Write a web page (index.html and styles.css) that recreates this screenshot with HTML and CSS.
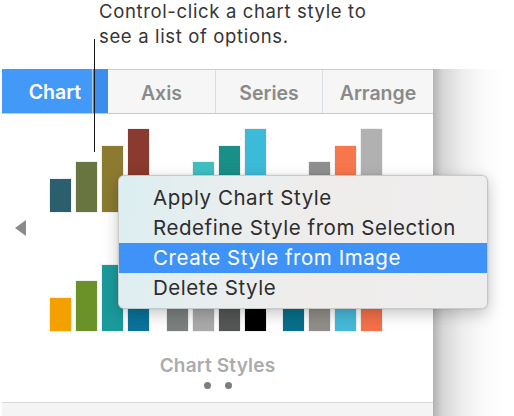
FILE: index.html
```html
<!DOCTYPE html>
<html>
<head>
<meta charset="utf-8">
<link rel="stylesheet" href="styles.css">
</head>
<body>
<div class="page">
  <p class="caption">Control-click a chart style to<br>see a list of options.</p>
  <div class="inspector">
    <div class="panel">
      <div class="tabs">
        <div class="tab active">Chart</div>
        <div class="tab">Axis</div>
        <div class="tab">Series</div>
        <div class="tab">Arrange</div>
      </div>
      <div class="content">
        <div class="styles">
          <span class="arrow"></span>
          <div class="grid">
            <div class="thumb">
              <span class="bar h1" style="background:#2b5f6e"></span>
              <span class="bar h2" style="background:#687540"></span>
              <span class="bar h3" style="background:#8c7a30"></span>
              <span class="bar h4" style="background:#8a3a2e"></span>
            </div>
            <div class="thumb">
              <span class="bar h1" style="background:#2a7d8c"></span>
              <span class="bar h2" style="background:#40bfc1"></span>
              <span class="bar h3" style="background:#1a8f88"></span>
              <span class="bar h4" style="background:#3cbbd8"></span>
            </div>
            <div class="thumb">
              <span class="bar h1" style="background:#666666"></span>
              <span class="bar h2" style="background:#8f8f8f"></span>
              <span class="bar h3" style="background:#f7764b"></span>
              <span class="bar h4" style="background:#b1b1b1"></span>
            </div>
            <div class="thumb">
              <span class="bar h1" style="background:#f2a100"></span>
              <span class="bar h2" style="background:#6b9129"></span>
              <span class="bar h3" style="background:#1b9a9b"></span>
              <span class="bar h4" style="background:#0a729b"></span>
            </div>
            <div class="thumb">
              <span class="bar h1" style="background:#7b807e"></span>
              <span class="bar h2" style="background:#a9a9a9"></span>
              <span class="bar h3" style="background:#545756"></span>
              <span class="bar h4" style="background:#000000"></span>
            </div>
            <div class="thumb">
              <span class="bar h1" style="background:#076f8b"></span>
              <span class="bar h2" style="background:#918d88"></span>
              <span class="bar h3" style="background:#46b9d9"></span>
              <span class="bar h4" style="background:#f47048"></span>
            </div>
          </div>
        </div>
        <div class="label">Chart Styles</div>
        <div class="dots"><span></span><span></span></div>
      </div>
      <div class="footer"></div>
    </div>
    <div class="shade"></div>
  </div>
  <div class="leader"></div>
  <ul class="menu">
    <li>Apply Chart Style</li>
    <li>Redefine Style from Selection</li>
    <li class="selected">Create Style from Image</li>
    <li>Delete Style</li>
  </ul>
</div>
</body>
</html>
```

FILE: styles.css
```css
* { box-sizing: border-box; }
html, body { margin: 0; padding: 0; background: #fff; }
body { font-family: Inter, "Liberation Sans", sans-serif; }
.page { position: relative; width: 514px; height: 416px; overflow: hidden; }

.caption {
  margin: -1px 0 0;
  height: 70px;
  padding-left: 99px;
  font-size: 18.5px;
  line-height: 25px;
  letter-spacing: 0.65px;
  color: #353535;
}

.inspector { display: flex; height: 347px; }
.panel { margin-left: 2px; width: 431px; display: flex; flex-direction: column; background: #fff; }
.shade { flex: 1; background: linear-gradient(to right, #b3b3b3 0, #d6d6d6 10px, #eeeeee 30px, #fafafa 50px, #ffffff 70px); }

.tabs {
  display: grid;
  grid-template-columns: 106px 107px 107px 111px;
  height: 45px;
  border-top: 1px solid #cbcbcb;
  border-bottom: 1px solid #c9c9c9;
  background: #f6f6f6;
}
.tab {
  display: flex; align-items: center; justify-content: center;
  padding-top: 2px;
  font-size: 19.5px; font-weight: 600; color: #8a8a8a;
}
.tab + .tab { border-left: 1px solid #d7dde3; }
.tab.active + .tab { border-left: 0; }
.tab.active {
  color: #fff;
  margin-top: -1px;
  background: linear-gradient(to right, #4399f7 0 90px, #a6cbf4 90px 91px, #3b8eed 91px);
}

.content { flex: 1; display: flex; flex-direction: column; align-items: center; }
.styles { align-self: stretch; display: flex; align-items: center; padding: 15px 0 0 13px; }
.arrow {
  width: 0; height: 0;
  border-right: 11px solid #8a8a8a;
  border-top: 8.5px solid transparent;
  border-bottom: 8.5px solid transparent;
  margin: -5px 24px 0 0;
}
.grid { display: grid; grid-template-columns: repeat(3, 99px); column-gap: 17.5px; row-gap: 36px; }
.thumb { display: flex; align-items: flex-end; gap: 5px; height: 83px; }
.bar { width: 21px; box-shadow: 0 0 1px rgba(0,0,0,0.35); }
.h1 { height: 33px; }
.h2 { height: 50px; }
.h3 { height: 66px; }
.h4 { height: 83px; }

.label {
  margin-top: 23px;
  font-size: 19px; font-weight: 600; color: #ababab;
  letter-spacing: 0.2px;
  line-height: 23px;
}
.dots { display: flex; gap: 14px; margin-top: 5px; }
.dots span { width: 7px; height: 7px; border-radius: 50%; background: #7e7e7e; }

.footer { height: 14px; border-top: 1px solid #d9d9d9; background: #f4f4f4; }

.leader { position: absolute; left: 93.5px; top: 39px; width: 1.5px; height: 113px; background: #161616; }

.menu {
  position: absolute; left: 118px; top: 175px; width: 370px; height: 134px;
  margin: 0; padding: 7px 0; list-style: none;
  border-radius: 6px;
  border: 0.5px solid rgba(0,0,0,0.15);
  background: linear-gradient(100deg, #dbeef1 0%, #e9eeee 30%, #efeceb 55%, #eeeeee 100%);
  box-shadow: 0 5px 16px rgba(0,0,0,0.22), 0 0 2px rgba(0,0,0,0.15);
  overflow: hidden;
}
.menu li {
  height: 30px; line-height: 30px; padding-left: 34px;
  font-size: 20.5px; letter-spacing: 0.55px; color: #2d2d2d;
}
.menu li.selected { background: #3f92f8; color: #fff; }
```
